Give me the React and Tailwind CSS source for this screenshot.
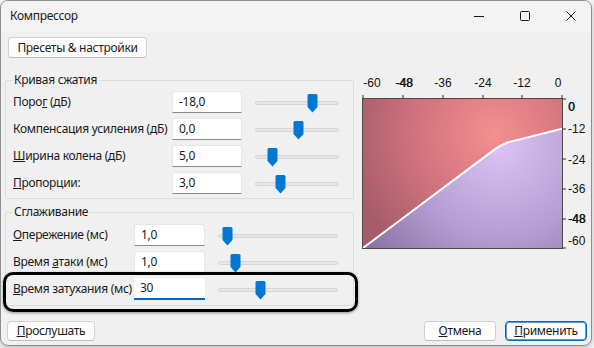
import React from "react";

const FONT = { fontFamily: '"Noto Sans", "Open Sans", Arial, sans-serif', letterSpacing: "-0.3px" };

function Slider({ width, thumb }) {
  return (
    <div className="relative h-[22px]" style={{ width }}>
      <div className="absolute left-0 right-0 top-[10px] h-[4px] rounded-[2px] border border-[#d6d6d6] bg-[#e6e6e6]" />
      <svg
        className="absolute top-[3px]"
        style={{ left: thumb - 5 }}
        width="11"
        height="19"
        viewBox="0 0 11 19"
      >
        <path d="M0.5,1.5 Q0.5,0 2,0 H9 Q10.5,0 10.5,1.5 V13 L5.5,18.5 L0.5,13 Z" fill="#0078d4" />
      </svg>
    </div>
  );
}

function Input({ value, active }) {
  return (
    <div
      className={
        "flex h-[22px] items-center rounded-t-[3px] bg-white pl-[6px] text-[12px] text-[#1a1a1a] " +
        (active
          ? "border-b-2 border-[#0067c0]"
          : "border border-[#e6e6e6] border-b-[#8a8a8a]")
      }
    >
      <span>{value}</span>
    </div>
  );
}

function Label({ children }) {
  return (
    <div className="flex h-[22px] items-center overflow-visible text-[12px] text-[#1a1a1a] whitespace-nowrap">
      <span>{children}</span>
    </div>
  );
}

function Group({ title, className, children }) {
  return (
    <div className={"relative rounded-[2px] border border-[#dcdcdc] " + className}>
      <div className="absolute left-[6px] top-[-9px] bg-[#f0f0f0] px-[2px] text-[12px] leading-[16px] text-[#1a1a1a]">
        {title}
      </div>
      {children}
    </div>
  );
}

function Button({ children, primary, className }) {
  return (
    <div
      className={
        "flex h-[20px] items-center justify-center rounded-[4px] bg-[#fdfdfd] text-[12px] text-[#1a1a1a] " +
        (primary
          ? "border border-[#0067c0] shadow-[inset_0_0_0_1px_#5a9ad8]"
          : "border border-[#d0d0d0] border-b-[#bdbdbd]") +
        " " +
        (className || "")
      }
    >
      <span>{children}</span>
    </div>
  );
}

function Graph() {
  const x0 = 5,
    y0 = 27,
    w = 199,
    h = 149;
  const X = (db) => x0 + ((db + 60) / 60) * w;
  const Y = (db) => y0 + (-db / 60) * h;
  const k1x = X(-20.5),
    k1y = Y(-20.5);
  const k2x = X(-15.5),
    k2y = Y(-18 + 2.5 / 3);
  const cx = X(-18),
    cy = Y(-18);
  const ex = X(0),
    ey = Y(-12);
  const curve = `L${k1x},${k1y} Q${cx},${cy} ${k2x},${k2y} L${ex},${ey}`;
  const upper = `M${x0},${y0} L${x0 + w},${y0} L${ex},${ey} L${k2x},${k2y} Q${cx},${cy} ${k1x},${k1y} L${x0},${y0 + h} Z`;
  const lower = `M${x0},${y0 + h} ${curve} L${x0 + w},${y0 + h} Z`;
  const topTicks = [5, 45, 85, 125, 164, 204];
  const topLabels = [
    ["-60", 14],
    ["-48", 46],
    ["-36", 85],
    ["-24", 125],
    ["-12", 164],
    ["0", 200],
  ];
  const rightTicks = [27, 57, 87, 117, 147, 176];
  const rightLabels = [
    ["0", 39],
    ["-12", 61],
    ["-24", 92],
    ["-36", 121],
    ["-48", 151],
    ["-60", 173],
  ];
  const tf = { fontFamily: '"Liberation Sans", Arial, sans-serif', fontSize: 12, fill: "#111", letterSpacing: 0 };
  return (
    <svg width="232" height="182" viewBox="0 0 232 182" className="shrink-0">
      <defs>
        <radialGradient id="red" cx="137" cy="62" r="150" gradientUnits="userSpaceOnUse">
          <stop offset="0" stopColor="#f39090" />
          <stop offset="0.55" stopColor="#d0727c" />
          <stop offset="1" stopColor="#a45c6a" />
        </radialGradient>
        <radialGradient id="purple" cx="142" cy="76" r="160" gradientUnits="userSpaceOnUse">
          <stop offset="0" stopColor="#dcc2f4" />
          <stop offset="0.55" stopColor="#b59ed2" />
          <stop offset="1" stopColor="#8c74a4" />
        </radialGradient>
      </defs>
      <path d={upper} fill="url(#red)" />
      <path d={lower} fill="url(#purple)" />
      <path d={`M${x0},${y0 + h} ${curve}`} fill="none" stroke="#ffffff" strokeWidth="2" />
      <rect x={x0 - 0.5} y={y0 - 0.5} width={w + 1} height={h + 1} fill="none" stroke="#4a4a4a" strokeWidth="1" />
      {topTicks.map((t) => (
        <line key={t} x1={t} x2={t} y1={y0 - 4} y2={y0} stroke="#333" strokeWidth="1" />
      ))}
      {rightTicks.map((t) => (
        <line key={t} x1={x0 + w} x2={x0 + w + 4} y1={t} y2={t} stroke="#333" strokeWidth="1" />
      ))}
      {topLabels.map(([s, x]) => (
        <text key={s} x={x} y={15} textAnchor="middle" style={tf}>
          {s}
        </text>
      ))}
      <text x={46.6} y={15} textAnchor="middle" style={tf}>
        -48
      </text>
      {rightLabels.map(([s, y]) => (
        <text key={s} x={210} y={y} style={tf}>
          {s}
        </text>
      ))}
      <text x={210.6} y={39} style={tf}>
        0
      </text>
      <text x={210.6} y={151} style={tf}>
        -48
      </text>
    </svg>
  );
}

export default function App() {
  return (
    <div className="h-[348px] w-[594px] overflow-hidden bg-[#f7f7f7]" style={FONT}>
      <div className="relative flex h-[346px] w-[592px] flex-col overflow-hidden rounded-[8px] border border-[#8d8d8d] bg-[#f0f0f0] shadow-[0_2px_6px_rgba(0,0,0,0.25)]">
        {/* title bar */}
        <div className="flex h-[30px] shrink-0 items-center bg-[#f3f3f3]">
          <div className="pl-[9px] text-[12px] text-[#1a1a1a]">Компрессор</div>
          <div className="ml-auto mr-[-3px] flex h-full">
            <div className="flex w-[46px] items-center justify-center">
              <svg width="10" height="10" viewBox="0 0 10 10">
                <line x1="0" y1="5.5" x2="10" y2="5.5" stroke="#1a1a1a" strokeWidth="1" />
              </svg>
            </div>
            <div className="flex w-[46px] items-center justify-center">
              <svg width="10" height="10" viewBox="0 0 10 10">
                <rect x="0.5" y="0.5" width="9" height="9" rx="1" fill="none" stroke="#1a1a1a" strokeWidth="1" />
              </svg>
            </div>
            <div className="flex w-[46px] items-center justify-center">
              <svg width="10" height="10" viewBox="0 0 10 10">
                <path d="M0.5,0.5 L9.5,9.5 M9.5,0.5 L0.5,9.5" stroke="#1a1a1a" strokeWidth="1" />
              </svg>
            </div>
          </div>
        </div>

        {/* presets */}
        <div className="pl-[7px] pt-[6px]">
          <Button className="w-[139px] h-[21px]">Пресеты &amp; настройки</Button>
        </div>

        {/* body */}
        <div className="mt-[14px] flex items-start">
          <div className="ml-[4px] flex w-[349px] flex-col pt-[8px]">
            <Group title="Кривая сжатия" className="pl-[7px] pt-[10px] pb-[4px]">
              <div className="grid grid-cols-[146px_70px_84px] gap-x-[13px] gap-y-[5px]">
                <Label>
                  Поро<u>г</u> (дБ)
                </Label>
                <Input value="-18,0" />
                <Slider width={84} thumb={312 - 255} />
                <Label>Компенсация усиления (дБ)</Label>
                <Input value="0,0" />
                <Slider width={84} thumb={298 - 255} />
                <Label>
                  <u>Ш</u>ирина колена (дБ)
                </Label>
                <Input value="5,0" />
                <Slider width={84} thumb={272 - 255} />
                <Label>
                  <u>П</u>ропорции:
                </Label>
                <Input value="3,0" />
                <Slider width={84} thumb={280 - 255} />
              </div>
            </Group>
            <Group title="Сглаживание" className="mt-[13px] pl-[7px] pt-[11px] pb-[5px]">
              <div className="grid grid-cols-[108px_71px_120px] gap-x-[13px] gap-y-[5px]">
                <Label>
                  <u>О</u>пережение (мс)
                </Label>
                <Input value="1,0" />
                <Slider width={120} thumb={227 - 218} />
                <Label>
                  Время <u>а</u>таки (мс)
                </Label>
                <Input value="1,0" />
                <Slider width={120} thumb={235 - 218} />
                <Label>
                  <u>В</u>ремя затухания (мс)
                </Label>
                <Input value="30" active />
                <Slider width={120} thumb={260 - 218} />
              </div>
            </Group>
          </div>
          <div className="ml-[4px]">
            <Graph />
          </div>
        </div>

        {/* footer */}
        <div className="mt-auto mb-[4px] flex items-center pl-[6px] pr-[4px]">
          <Button className="w-[88px]">
            <u>П</u>рослушать
          </Button>
          <Button className="ml-auto w-[72px]">
            <u>О</u>тмена
          </Button>
          <Button primary className="ml-[9px] w-[82px]">
            <u>П</u>рименить
          </Button>
        </div>

        {/* highlight annotation */}
        <div className="absolute left-[2px] top-[271px] h-[40px] w-[355px] rounded-[10px] border-[3px] border-black shadow-[0_1px_3px_rgba(0,0,0,0.4)]" />
      </div>
    </div>
  );
}
